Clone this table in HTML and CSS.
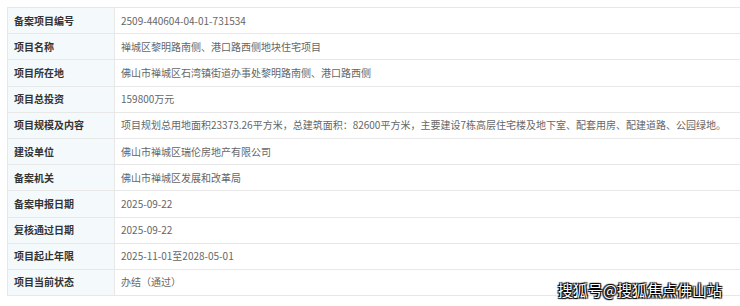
FILE: index.html
```html
<!DOCTYPE html>
<html lang="zh">
<head>
<meta charset="utf-8">
<link rel="stylesheet" href="styles.css">
</head>
<body>
<div class="wrap">
<table class="info">
<tr><th>备案项目编号</th><td>2509-440604-04-01-731534</td></tr>
<tr><th>项目名称</th><td>禅城区黎明路南侧、港口路西侧地块住宅项目</td></tr>
<tr><th>项目所在地</th><td>佛山市禅城区石湾镇街道办事处黎明路南侧、港口路西侧</td></tr>
<tr><th>项目总投资</th><td>159800万元</td></tr>
<tr><th>项目规模及内容</th><td>项目规划总用地面积23373.26平方米，总建筑面积：82600平方米，主要建设7栋高层住宅楼及地下室、配套用房、配建道路、公园绿地。</td></tr>
<tr><th>建设单位</th><td>佛山市禅城区瑞伦房地产有限公司</td></tr>
<tr><th>备案机关</th><td>佛山市禅城区发展和改革局</td></tr>
<tr><th>备案申报日期</th><td>2025-09-22</td></tr>
<tr><th>复核通过日期</th><td>2025-09-22</td></tr>
<tr><th>项目起止年限</th><td>2025-11-01至2028-05-01</td></tr>
<tr><th>项目当前状态</th><td>办结（通过）</td></tr>
</table>
<div class="mark">搜狐号@搜狐焦点佛山站</div>
</div>
</body>
</html>
```
FILE: styles.css
```css
html, body {
  margin: 0;
  padding: 0;
  background: #fff;
  overflow: hidden;
}
.wrap {
  position: relative;
  width: 740px;
  height: 306px;
  padding: 7px 0 0 7px;
  box-sizing: border-box;
}
.info {
  border-collapse: collapse;
  table-layout: fixed;
  width: 740px;
  font-family: "Noto Sans CJK SC", "Noto Sans", sans-serif;
  font-size: 10px;
}
.info th, .info td {
  border: 1px solid #e8e8e8;
  height: 25.2px;
  padding: 0 0 0 6px;
  white-space: nowrap;
  line-height: 14px;
}
.info th {
  width: 100px;
  text-align: left;
  font-weight: bold;
  color: #333;
  background: #f4fafc;
}
.info td {
  color: #666;
  border-right: none;
}
.mark {
  position: absolute;
  right: 18px;
  bottom: 6px;
  font-family: "Noto Sans CJK SC", sans-serif;
  font-size: 15px;
  color: #fff;
  text-shadow: 0 0 1px #000, 1px 1px 1px #000, -1px -1px 1px #000, 1px -1px 1px #000, -1px 1px 1px #000;
}
```
